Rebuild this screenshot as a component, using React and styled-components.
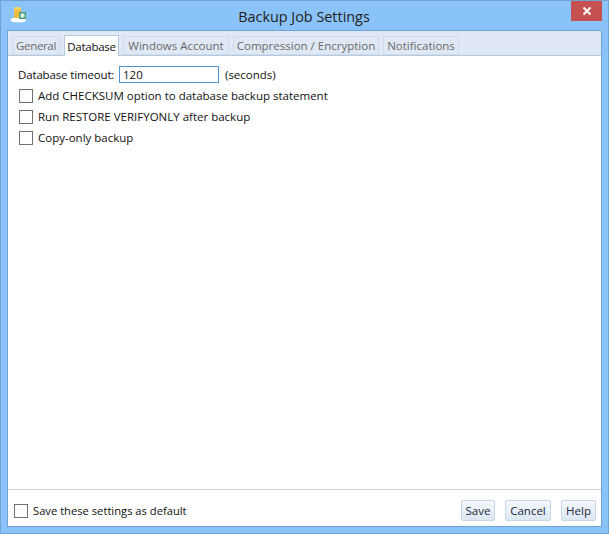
import React from "react";
import styled, { createGlobalStyle } from "styled-components";

const Global = createGlobalStyle`
  html, body { margin: 0; padding: 0; background: #8ac3f9; }
  body { font-family: "Open Sans", "Noto Sans", sans-serif; font-size: 12px; color: #1c1c1c; }
`;
const Win = styled.div`
  width: 609px; height: 534px; box-sizing: border-box;
  border: 1px solid #6ea3d3; background: #8ac3f9;
  display: flex; flex-direction: column; overflow: hidden;
`;
const TitleBar = styled.div`
  height: 29px; flex: none; position: relative; display: flex; justify-content: center; align-items: center;
  padding-top: 1px; box-sizing: border-box;
`;
const TitleIcon = styled.svg`
  position: absolute; left: 9px; top: 5px; width: 18px; height: 18px;
`;
const Title = styled.div`
  font-size: 14.4px; color: #222; padding-top: 1px; margin-left: -1px;
`;
const Close = styled.div`
  position: absolute; right: 6px; top: 0; width: 31px; height: 20px; background: #c75050; color: #fff;
  display: flex; align-items: center; justify-content: center;
`;
const Client = styled.div`
  flex: 1; margin: 0 6px 6px 6px; border: 1px solid #6ea3d3; background: #fff;
  display: flex; flex-direction: column; min-height: 0;
`;
const TabStrip = styled.div`
  height: 24px; flex: none; background: #dfe8f4; border-bottom: 1px solid #b5c9e0; box-sizing: content-box;
  display: flex; align-items: flex-end; padding-left: 4px; gap: 4px;
`;
const Tab = styled.div`
  width: ${p => p.$w}px; height: ${p => (p.$active ? 21 : 19)}px; box-sizing: border-box;
  margin-bottom: ${p => (p.$active ? -1 : 0)}px;
  border: 1px solid ${p => (p.$active ? "#b5c9e0" : "#cfdbea")}; border-bottom: ${p => (p.$active ? "none" : "1px solid #cfdbea")};
  background: ${p => (p.$active ? "#fff" : "#dfe8f4")};
  color: ${p => (p.$active ? "#111" : "#6a6a6a")};
  display: flex; align-items: center; justify-content: center; white-space: nowrap; font-size: 11.5px;
  letter-spacing: ${p => p.$ls || 0}px;
`;
const Body = styled.div`
  flex: 1; display: flex; flex-direction: column; padding: 10px 10px 0 10px;
`;
const TimeoutRow = styled.div`
  display: flex; align-items: center; height: 17px; margin-bottom: 2px; font-size: 11.5px; color: #111;
`;
const TimeoutLabel = styled.span`
  width: 97px; white-space: nowrap; letter-spacing: -0.15px;
`;
const TimeoutInput = styled.div`
  width: 100px; height: 17px; box-sizing: border-box; border: 1px solid #4d94d8; margin: 0 6px 0 4px;
  padding-left: 3px; display: flex; align-items: center; background: #fff;
`;
const CheckRow = styled.div`
  display: flex; align-items: center; height: 21px; padding-left: 1px; font-size: 11.5px; white-space: nowrap; color: #111;
`;
const Box = styled.div`
  width: 14px; height: 14px; box-sizing: border-box; border: 1px solid #707070; background: #fff; margin-right: 5px; flex: none;
`;
const Footer = styled.div`
  height: 31px; flex: none; border-top: 1px solid #c3cfdc; display: flex; align-items: center;
  padding: 5px 5px 0 6px; box-sizing: content-box;
`;
const SaveDefault = styled.span`
  font-size: 11.2px; white-space: nowrap; color: #111; margin-top: -1px;
`;
const Spacer = styled.div`flex: 1;`;
const Btn = styled.div`
  height: 21px; width: ${p => p.$w}px; box-sizing: border-box; margin-left: ${p => p.$ml || 0}px;
  border: 1px solid #c9d6e6; border-radius: 2px;
  background: linear-gradient(#f4f8fc, #dce7f3); color: #1c2a3a; font-size: 11.5px;
  display: flex; align-items: center; justify-content: center;
`;

export default function App() {
  return (
    <Win>
      <Global />
      <TitleBar>
        <TitleIcon viewBox="0 0 18 18">
          <ellipse cx="6" cy="14" rx="5.5" ry="2.6" fill="#fff" />
          <ellipse cx="11" cy="14" rx="5" ry="2.4" fill="#fff" />
          <rect x="4" y="2" width="7" height="10" fill="#f2bc3c" />
          <ellipse cx="7.5" cy="2.4" rx="3.5" ry="1.4" fill="#f7d76e" />
          <rect x="9" y="6" width="7" height="7" fill="#4c9a7e" />
          <rect x="10.5" y="7.5" width="4" height="4" fill="#dff1e4" />
        </TitleIcon>
        <Title>Backup Job Settings</Title>
        <Close>
          <svg width="10" height="10" viewBox="0 0 10 10"><path d="M1.5 1.5 L8.5 8.5 M8.5 1.5 L1.5 8.5" stroke="#fff" strokeWidth="2" /></svg>
        </Close>
      </TitleBar>
      <Client>
        <TabStrip>
          <Tab $w={48} $ls={-0.35}>General</Tab>
          <Tab $w={55} $active $ls={-0.25}>Database</Tab>
          <Tab $w={106}>Windows Account</Tab>
          <Tab $w={146}>Compression / Encryption</Tab>
          <Tab $w={76}>Notifications</Tab>
        </TabStrip>
        <Body>
          <TimeoutRow>
            <TimeoutLabel>Database timeout:</TimeoutLabel>
            <TimeoutInput>120</TimeoutInput>
            (seconds)
          </TimeoutRow>
          <CheckRow><Box />Add CHECKSUM option to database backup statement</CheckRow>
          <CheckRow><Box />Run RESTORE VERIFYONLY after backup</CheckRow>
          <CheckRow><Box />Copy-only backup</CheckRow>
        </Body>
        <Footer>
          <Box />
          <SaveDefault>Save these settings as default</SaveDefault>
          <Spacer />
          <Btn $w={34}>Save</Btn>
          <Btn $w={46} $ml={10}>Cancel</Btn>
          <Btn $w={35} $ml={10}>Help</Btn>
        </Footer>
      </Client>
    </Win>
  );
}
